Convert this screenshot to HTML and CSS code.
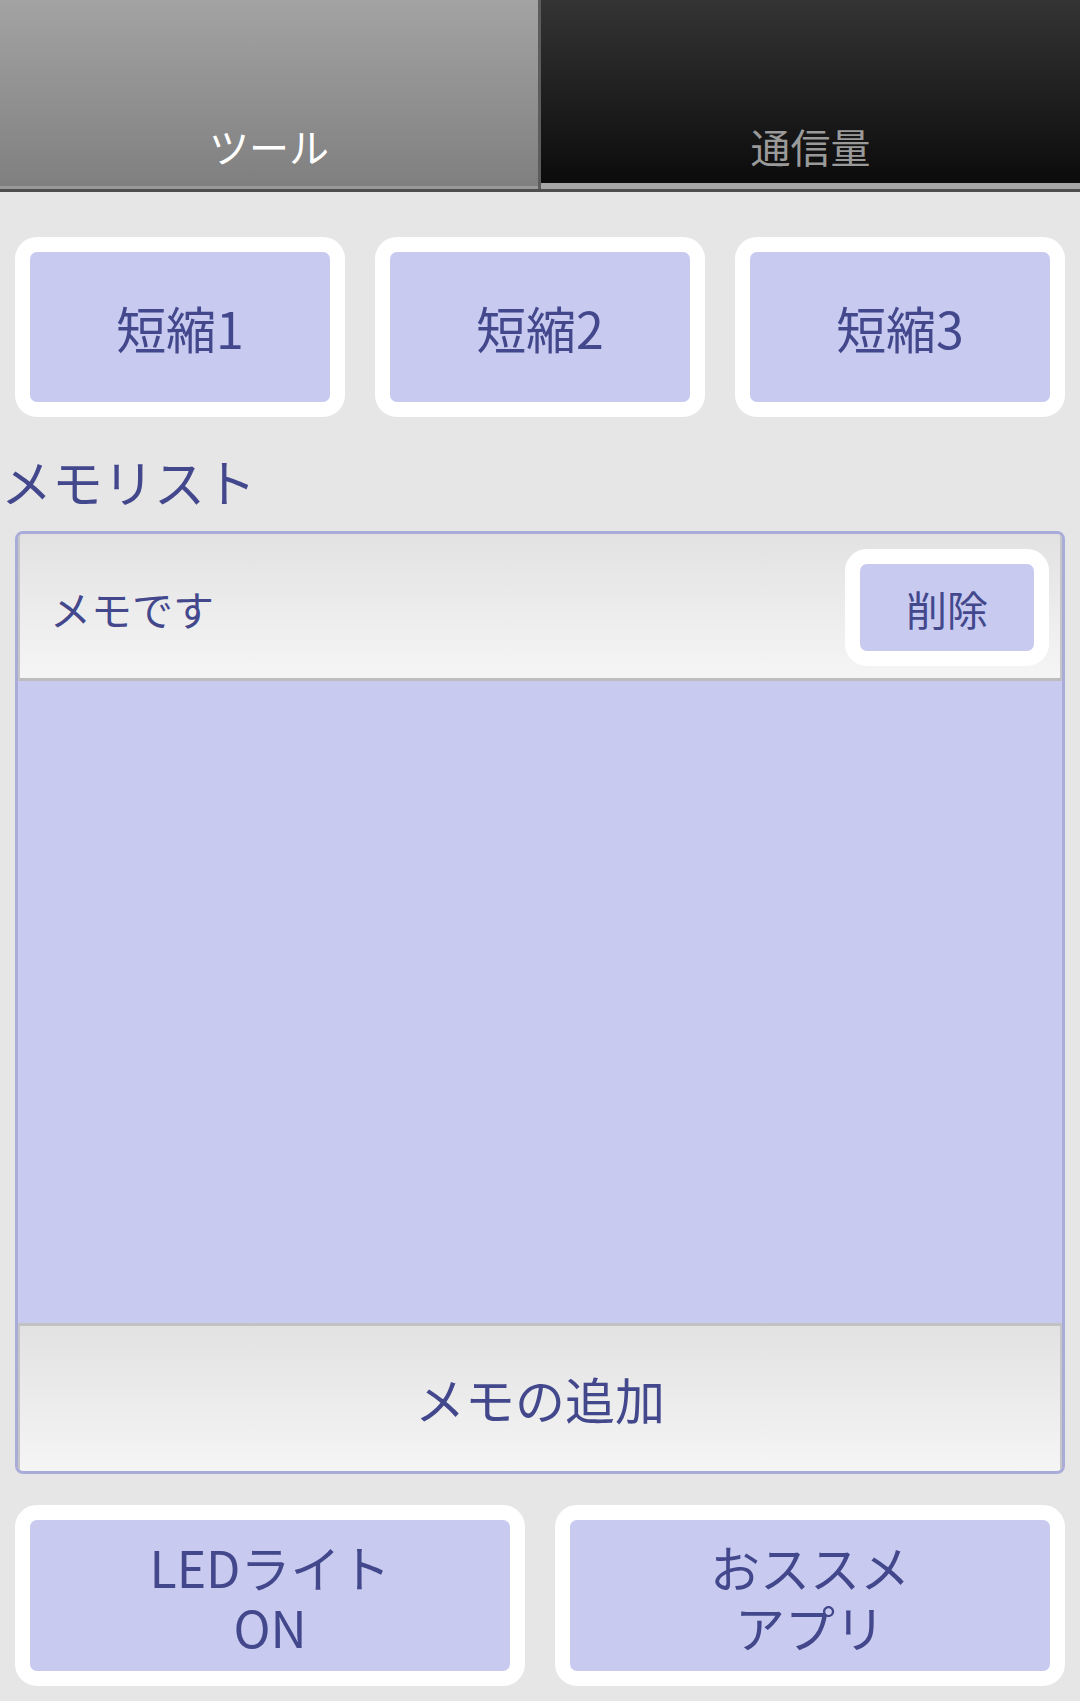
FILE: index.html
```html
<!DOCTYPE html>
<html lang="ja">
<head>
<meta charset="utf-8">
<title>ツール</title>
<link rel="stylesheet" href="styles.css">
</head>
<body>
<div class="app">
  <div class="tabs">
    <div class="tab tab-active">ツール</div>
    <div class="tab tab-inactive">通信量</div>
  </div>

  <div class="shortcuts">
    <div class="btn btn-short">短縮1</div>
    <div class="btn btn-short">短縮2</div>
    <div class="btn btn-short">短縮3</div>
  </div>

  <div class="heading">メモリスト</div>

  <div class="memo-list">
    <div class="memo-row">
      <span class="memo-text">メモです</span>
      <div class="btn btn-delete">削除</div>
    </div>
    <div class="memo-empty"></div>
    <div class="memo-add">メモの追加</div>
  </div>

  <div class="bottom">
    <div class="btn btn-big">
      <div class="line">LEDライト</div>
      <div class="line">ON</div>
    </div>
    <div class="btn btn-big">
      <div class="line">おススメ</div>
      <div class="line">アプリ</div>
    </div>
  </div>
</div>
</body>
</html>
```

FILE: styles.css
```css
* { box-sizing: border-box; }

html, body {
  margin: 0;
  padding: 0;
  background: #e6e6e6;
}

body {
  font-family: "Noto Sans CJK JP", "Noto Sans", sans-serif;
  color: #43488d;
}

.app {
  width: 1080px;
  height: 1701px;
  overflow: hidden;
}

/* Tabs */
.tabs {
  display: flex;
  height: 192px;
  border-bottom: 3px solid #4e4e4e;
}

.tab {
  display: flex;
  align-items: flex-end;
  justify-content: center;
  font-size: 40px;
  line-height: 40px;
  padding-bottom: 23px;
}

.tab-active {
  flex: 0 0 538px;
  background: linear-gradient(#a3a3a3, #7f7f7f);
  box-shadow: inset 0 -3px 0 #999999;
  color: #ffffff;
}

.tab-inactive {
  flex: 1;
  background: linear-gradient(#343434, #0a0a0a);
  border-left: 3px solid #5c5c5c;
  box-shadow: inset 0 -6px 0 #a6a6a6;
  color: #9a9a9a;
}

/* Buttons */
.btn {
  display: flex;
  align-items: center;
  justify-content: center;
  text-align: center;
  background: #c8cbef;
  border: 15px solid #ffffff;
  border-radius: 22px;
  color: #43488d;
}

.shortcuts {
  display: grid;
  grid-template-columns: repeat(3, 1fr);
  gap: 30px;
  padding: 0 15px;
  margin-top: 45px;
}

.btn-short {
  height: 180px;
  font-size: 50px;
}

.heading {
  margin-top: 26px;
  padding-left: 1px;
  font-size: 51px;
  line-height: 76px;
  height: 76px;
}

/* Memo list */
.memo-list {
  margin: 12px 15px 0;
  height: 943px;
  border: 3px solid #a9acd9;
  border-radius: 8px;
  overflow: hidden;
  display: flex;
  flex-direction: column;
}

.memo-row {
  height: 147px;
  flex: 0 0 147px;
  display: flex;
  align-items: center;
  justify-content: space-between;
  background: linear-gradient(#e2e2e2, #f5f5f5);
  border-left: 2px solid #c6c6c6;
  border-right: 2px solid #c6c6c6;
  border-bottom: 3px solid #bdbdbd;
  padding: 12px 11px 9px 30px;
}

.memo-text {
  font-size: 41px;
  line-height: 48px;
}

.btn-delete {
  width: 204px;
  height: 117px;
  font-size: 41px;
}

.memo-empty {
  flex: 1;
  background: #c8cbef;
}

.memo-add {
  flex: 0 0 148px;
  display: flex;
  align-items: center;
  justify-content: center;
  background: linear-gradient(#e2e2e2, #f5f5f5);
  border-top: 3px solid #c2c2c2;
  border-left: 2px solid #c6c6c6;
  border-right: 2px solid #c6c6c6;
  font-size: 50px;
  padding-bottom: 2px;
}

/* Bottom buttons */
.bottom {
  display: grid;
  grid-template-columns: 1fr 1fr;
  gap: 30px;
  padding: 0 15px;
  margin-top: 31px;
}

.btn-big {
  height: 181px;
  flex-direction: column;
  font-size: 50px;
}

.btn-big .line {
  height: 60px;
  line-height: 60px;
  white-space: nowrap;
}
```
